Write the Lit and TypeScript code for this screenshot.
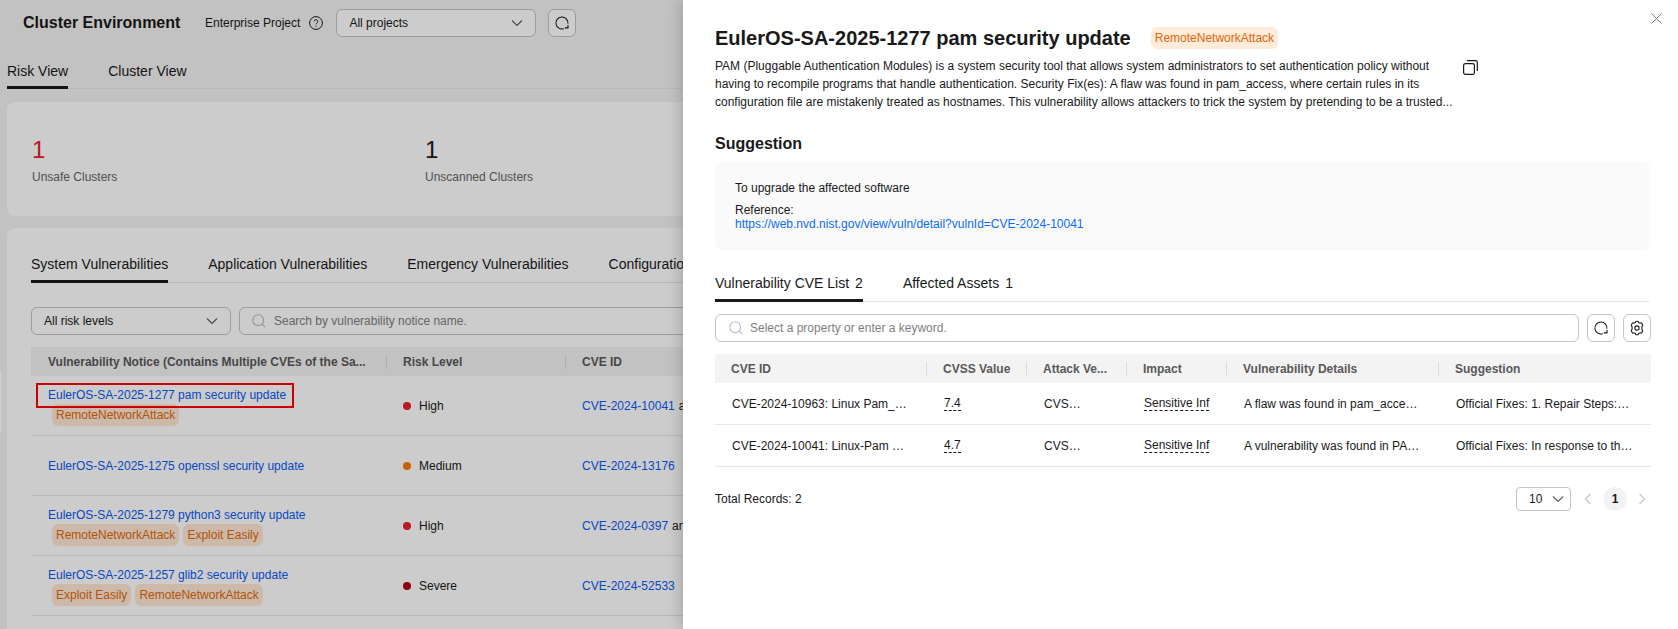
import { LitElement, html, css } from "lit";
import { customElement } from "lit/decorators.js";

const chev = html`<svg class="chev" width="12" height="12" viewBox="0 0 12 12"><path d="M1 3.5 6 8.5 11 3.5" fill="none" stroke="currentColor" stroke-width="1.1"/></svg>`;
const search = html`<svg class="sicon" width="14" height="14" viewBox="0 0 14 14"><circle cx="6.2" cy="6.2" r="5.4" fill="none" stroke="#bbb" stroke-width="1.1"/><path d="M10.2 10.2 13 13" stroke="#bbb" stroke-width="1.1"/></svg>`;
const refresh = html`<svg width="16" height="16" viewBox="0 0 16 16"><path d="M9.8 13.7A6 6 0 1 1 13.9 8.800" fill="none" stroke="#191919" stroke-width="1.1"/><path d="M10.800 12.900H14V9.900" fill="none" stroke="#191919" stroke-width="1.1"/></svg>`;
const gear = html`<svg width="16" height="16" viewBox="0 0 16 16"><path d="M6.700 1.600Q8 .9 9.300 1.600L9.900 2.800Q10.400 3.100 11 3L12.300 2.900Q13.300 4 13.700 5.400L13 6.500Q12.800 8 13 9.500L13.700 10.600Q13.300 12 12.300 13.100L11 13Q10.400 12.900 9.900 13.200L9.300 14.400Q8 15.100 6.700 14.400L6.100 13.200Q5.600 12.900 5 13L3.700 13.100Q2.700 12 2.300 10.600L3 9.500Q3.200 8 3 6.500L2.300 5.400Q2.700 4 3.700 2.900L5 3Q5.600 3.100 6.100 2.800Z" fill="none" stroke="#191919" stroke-width="1.1" stroke-linejoin="round"/><circle cx="8" cy="8" r="2.1" fill="none" stroke="#191919" stroke-width="1.1"/></svg>`;

const rows = [
  { t: "EulerOS-SA-2025-1277 pam security update", tags: ["RemoteNetworkAttack"], r: "High", c: "#e6212a", cve: "CVE-2024-10041", more: "and", mark: true },
  { t: "EulerOS-SA-2025-1275 openssl security update", tags: [], r: "Medium", c: "#f97b00", cve: "CVE-2024-13176", more: "" },
  { t: "EulerOS-SA-2025-1279 python3 security update", tags: ["RemoteNetworkAttack", "Exploit Easily"], r: "High", c: "#e6212a", cve: "CVE-2024-0397", more: "and" },
  { t: "EulerOS-SA-2025-1257 glib2 security update", tags: ["Exploit Easily", "RemoteNetworkAttack"], r: "Severe", c: "#b30019", cve: "CVE-2024-52533", more: "" },
];

const cves = [
  ["CVE-2024-10963: Linux Pam_…", "7.4", "CVS…", "Sensitive Inf", "A flaw was found in pam_acce…", "Official Fixes: 1. Repair Steps:…"],
  ["CVE-2024-10041: Linux-Pam …", "4.7", "CVS…", "Sensitive Inf", "A vulnerability was found in PA…", "Official Fixes: In response to th…"],
];

@customElement("app-root")
export class AppRoot extends LitElement {
  static styles = css`
    :host { display: block; position: relative; width: 1678px; height: 629px; overflow: hidden; background: #f3f3f3; color: #191919; font: 12px "Liberation Sans", Arial, sans-serif; }
    * { box-sizing: border-box; }
    a { color: #0a59f7; text-decoration: none; }
    .page { padding: 0 0 0 7px; }
    .head { display: flex; align-items: center; height: 44px; padding: 0 0 0 16px; margin-top: 1px; }
    .head h1 { font-size: 16px; margin: 0 22px 0 0; width: 160px; white-space: nowrap; }
    .help { margin: 0 13px 0 9px; display: block; }
    .sel { display: flex; align-items: center; justify-content: space-between; height: 28px; border: 1px solid #c4c4c4; border-radius: 6px; background: #fff; padding: 0 12px; white-space: nowrap; }
    .head .sel { width: 200px; }
    .ibtn { width: 28px; height: 28px; border: 1px solid #c4c4c4; border-radius: 6px; background: #fff; display: flex; align-items: center; justify-content: center; }
    .head .ibtn { margin-left: 12px; }
    .tabs { display: flex; gap: 40px; border-bottom: 1px solid #e6e6e6; font-size: 14px; }
    .tabs span { padding-bottom: 8px; margin-bottom: -1px; border-bottom: 3px solid transparent; white-space: nowrap; }
    .tabs span.on { border-bottom-color: #191919; }
    .ptabs { height: 44px; align-items: flex-end; color: #191919; }
    .ptabs span { padding-bottom: 7px; }
    .card { background: #fff; border-radius: 8px; }
    .stats { margin-top: 13px; height: 114px; display: grid; grid-template-columns: 393px 393px; padding: 34px 25px 0; }
    .stats .n { font-size: 24px; line-height: 28px; display: block; }
    .stats .red { color: #e6212a; }
    .stats .l { color: #666; display: block; margin-top: 5px; line-height: 16px; }
    .main { margin-top: 12px; height: 500px; padding: 28px 24px; }
    .main .tabs span { padding-bottom: 8px; }
    .filter { display: flex; gap: 8px; margin-top: 24px; }
    .filter .sel { width: 200px; height: 28px; }
    .inp { flex: 1; height: 28px; border: 1px solid #c4c4c4; border-radius: 6px; background: #fff; display: flex; align-items: center; gap: 8px; padding: 0 12px; color: #808080; white-space: nowrap; }
    .grid { display: grid; grid-template-columns: 355px 179px 1fr; margin-top: 12px; }
    .th { background: #f3f3f3; height: 29px; display: flex; align-items: center; font-weight: bold; color: #595959; padding-left: 17px; position: relative; white-space: nowrap; }
    .th + .th::before { content: ""; position: absolute; left: 0; top: 8px; height: 14px; width: 1px; background: #dcdcdc; }
    .td { height: 60px; border-bottom: 1px solid #e6e6e6; display: flex; align-items: center; white-space: nowrap; }
    .td.name { flex-direction: column; align-items: flex-start; justify-content: center; padding-left: 17px; gap: 4px; position: relative; }
    .td.name.has { padding-top: 2px; gap: 2px; }
    .mark { position: absolute; left: 5px; top: 7px; width: 258px; height: 25px; border: 2px solid #f00; }
    .tags { display: flex; gap: 4px; padding-left: 4px; }
    .tag { height: 22px; line-height: 22px; padding: 0 4px; border-radius: 6px; background: #ffe8d4; color: #e0680c; white-space: nowrap; }
    .td.risk { padding-left: 17px; }
    .dot { width: 8px; height: 8px; border-radius: 50%; margin-right: 8px; }
    .td.cve { padding-left: 17px; gap: 4px; }
    .handle { position: absolute; left: 0; top: 370px; width: 2px; height: 63px; background: #fff; border-radius: 0 4px 4px 0; }
    .mask { position: absolute; inset: 0; background: rgba(0, 0, 0, .2); }
    .drawer { position: absolute; top: 0; right: 0; bottom: 0; width: 995px; background: #fff; padding: 27px 27px 0 32px; box-shadow: 0 0 16px rgba(0, 0, 0, .24); }
    .close { position: absolute; right: 16px; top: 13px; display: block; }
    .ttl { display: flex; align-items: center; height: 22px; }
    .ttl h2 { font-size: 20px; margin: 0 20px 0 0; white-space: nowrap; line-height: 22px; }
    .ttl .tag { background: #ffebd9; }
    .descw { display: flex; gap: 10px; margin-top: 8px; }
    .desc { width: 738px; line-height: 18px; margin: 0; color: #191919; }
    .copy { display: block; margin-top: 3px; }
    h3 { font-size: 16px; margin: 23px 0 0; line-height: 20px; }
    .box { margin-top: 7px; width: 935px; height: 90px; background: #fafafa; border-radius: 8px; padding: 20px; line-height: 14px; }
    .box p { margin: 0; }
    .box p + p { margin-top: 8px; }
    .box a { display: block; color: #0a6cf5; }
    .dtabs { margin-top: 24px; width: 935px; height: 27px; align-items: flex-start; }
    .dtabs span { padding-bottom: 5px; line-height: 16px; height: 27px; }
    .dtabs b { font-weight: normal; margin-left: 6px; }
    .tools { display: flex; gap: 8px; margin-top: 12px; width: 936px; }
    .tools .inp { padding-left: 13px; gap: 7px; }
    .tbl { display: grid; grid-template-columns: 211px 100px 100px 100px 212px 213px; width: 936px; margin-top: 12px; }
    .tbl .th { padding-left: 17px; }
    .tbl .th:first-child { padding-left: 16px; }
    .tc { height: 42px; border-bottom: 1px solid #e6e6e6; display: flex; align-items: center; padding-left: 18px; white-space: nowrap; min-width: 0; }
    .tc:nth-child(6n + 1) { padding-left: 17px; }
    .tc .dash { border-bottom: 1px dashed #191919; line-height: 14px; }
    .foot { display: flex; align-items: center; justify-content: space-between; width: 936px; margin-top: 20px; height: 24px; }
    .pager { display: flex; align-items: center; padding-right: 4px; }
    .pager .sel { width: 55px; height: 24px; padding: 0 6px 0 12px; margin-right: 12px; border-radius: 4px; }
    .pager .cur { width: 24px; height: 24px; border-radius: 50%; background: #f3f3f3; font-weight: bold; display: flex; align-items: center; justify-content: center; margin: 0 10px; }
    .pager svg { display: block; }
    .chev { color: #595959; flex: none; }
  `;

  render() {
    return html`
      <div class="page">
        <div class="head">
          <h1>Cluster Environment</h1>
          <span>Enterprise Project</span>
          <svg class="help" width="14" height="14" viewBox="0 0 14 14"><circle cx="7" cy="7" r="6.4" fill="none" stroke="#191919"/><path d="M5.2 5.4a1.8 1.8 0 1 1 2.7 1.6c-.6.4-.9.7-.9 1.400M7 9.800v1" fill="none" stroke="#191919"/></svg>
          <div class="sel">All projects ${chev}</div>
          <div class="ibtn">${refresh}</div>
        </div>
        <div class="tabs ptabs"><span class="on">Risk View</span><span>Cluster View</span></div>
        <div class="card stats">
          <div><span class="n red">1</span><span class="l">Unsafe Clusters</span></div>
          <div><span class="n">1</span><span class="l">Unscanned Clusters</span></div>
        </div>
        <div class="card main">
          <div class="tabs"><span class="on">System Vulnerabilities</span><span>Application Vulnerabilities</span><span>Emergency Vulnerabilities</span><span>Configuration</span></div>
          <div class="filter">
            <div class="sel">All risk levels ${chev}</div>
            <div class="inp">${search}Search by vulnerability notice name.</div>
          </div>
          <div class="grid">
            <div class="th">Vulnerability Notice (Contains Multiple CVEs of the Sa...</div>
            <div class="th">Risk Level</div>
            <div class="th">CVE ID</div>
            ${rows.map(r => html`
              <div class="td name ${r.tags.length ? "has" : ""}">
                ${r.mark ? html`<div class="mark"></div>` : ""}
                <a>${r.t}</a>
                ${r.tags.length ? html`<div class="tags">${r.tags.map(t => html`<span class="tag">${t}</span>`)}</div>` : ""}
              </div>
              <div class="td risk"><i class="dot" style="background:${r.c}"></i>${r.r}</div>
              <div class="td cve"><a>${r.cve}</a>${r.more ? html`<span>${r.more}</span>` : ""}</div>
            `)}
          </div>
        </div>
      </div>
      <div class="handle"></div>
      <div class="mask"></div>
      <aside class="drawer">
        <svg class="close" width="11" height="11" viewBox="0 0 11 11"><path d="M.5.5l10 10M10.500.5l-10 10" stroke="#7f7f7f" stroke-width="1"/></svg>
        <div class="ttl"><h2>EulerOS-SA-2025-1277 pam security update</h2><span class="tag">RemoteNetworkAttack</span></div>
        <div class="descw">
          <p class="desc">PAM (Pluggable Authentication Modules) is a system security tool that allows system administrators to set authentication policy without having to recompile programs that handle authentication. Security Fix(es): A flaw was found in pam_access, where certain rules in its configuration file are mistakenly treated as hostnames. This vulnerability allows attackers to trick the system by pretending to be a trusted...</p>
          <svg class="copy" width="15" height="15" viewBox="0 0 15 15"><rect x=".6" y="3.6" width="10.800" height="10.800" rx="1.800" fill="none" stroke="#191919" stroke-width="1.2"/><path d="M4 .7h8.500a1.800 1.800 0 0 1 1.800 1.800V11" fill="none" stroke="#191919" stroke-width="1.2"/></svg>
        </div>
        <h3>Suggestion</h3>
        <div class="box">
          <p>To upgrade the affected software</p>
          <p>Reference:<a>https://web.nvd.nist.gov/view/vuln/detail?vulnId=CVE-2024-10041</a></p>
        </div>
        <div class="tabs dtabs"><span class="on">Vulnerability CVE List<b>2</b></span><span>Affected Assets<b>1</b></span></div>
        <div class="tools">
          <div class="inp">${search}Select a property or enter a keyword.</div>
          <div class="ibtn">${refresh}</div>
          <div class="ibtn">${gear}</div>
        </div>
        <div class="tbl">
          ${["CVE ID", "CVSS Value", "Attack Ve...", "Impact", "Vulnerability Details", "Suggestion"].map(h => html`<div class="th">${h}</div>`)}
          ${cves.map(c => html`
            <div class="tc"><span>${c[0]}</span></div>
            <div class="tc"><span class="dash">${c[1]}</span></div>
            <div class="tc"><span>${c[2]}</span></div>
            <div class="tc"><span class="dash">${c[3]}</span></div>
            <div class="tc"><span>${c[4]}</span></div>
            <div class="tc"><span>${c[5]}</span></div>
          `)}
        </div>
        <div class="foot">
          <span>Total Records: 2</span>
          <div class="pager">
            <div class="sel">10 ${chev}</div>
            <svg width="10" height="12" viewBox="0 0 10 12"><path d="M7.500 1 2.500 6l5 5" fill="none" stroke="#c4c4c4" stroke-width="1.2"/></svg>
            <div class="cur">1</div>
            <svg width="10" height="12" viewBox="0 0 10 12"><path d="M2.500 1l5 5-5 5" fill="none" stroke="#c4c4c4" stroke-width="1.2"/></svg>
          </div>
        </div>
      </aside>
    `;
  }
}
